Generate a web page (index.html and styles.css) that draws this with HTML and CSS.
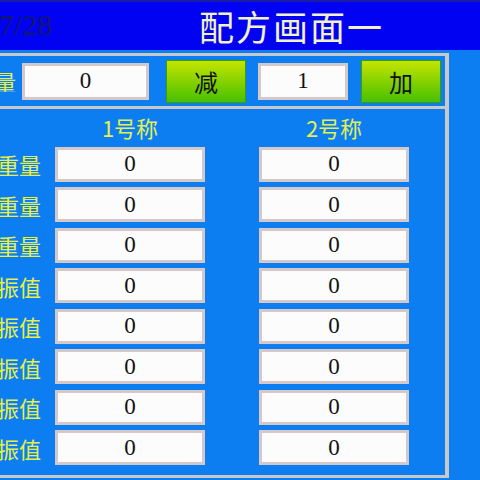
FILE: index.html
```html
<!DOCTYPE html>
<html>
<head>
<meta charset="utf-8">
<link rel="stylesheet" href="styles.css">
</head>
<body>
<div class="screen">
  <div class="header">
    <div class="date">7/28</div>
    <div class="title">配方画面一</div>
  </div>
  <div class="panel top">
    <div class="lbl top-lbl">重量</div>
    <div class="field f1">0</div>
    <div class="btn b1">减</div>
    <div class="field f2">1</div>
    <div class="btn b2">加</div>
  </div>
  <div class="panel main">
    <div class="grid">
      <div></div>
      <div class="colhead">1号称</div>
      <div class="colhead">2号称</div>

      <div class="lbl">重量</div><div class="field cell">0</div><div class="field cell">0</div>
      <div class="lbl">重量</div><div class="field cell">0</div><div class="field cell">0</div>
      <div class="lbl">重量</div><div class="field cell">0</div><div class="field cell">0</div>
      <div class="lbl">振值</div><div class="field cell">0</div><div class="field cell">0</div>
      <div class="lbl">振值</div><div class="field cell">0</div><div class="field cell">0</div>
      <div class="lbl">振值</div><div class="field cell">0</div><div class="field cell">0</div>
      <div class="lbl">振值</div><div class="field cell">0</div><div class="field cell">0</div>
      <div class="lbl">振值</div><div class="field cell">0</div><div class="field cell">0</div>
    </div>
  </div>
</div>
</body>
</html>
```
FILE: styles.css
```css
html, body {
  margin: 0;
  padding: 0;
}
body {
  width: 480px;
  height: 480px;
  overflow: hidden;
  background: #0c7ef2;
}
.screen {
  width: 480px;
  height: 480px;
  background: #0c7ef2;
}
.header {
  height: 48px;
  background: #0202f2;
  border-top: 2px solid #1a1aa8;
  display: flex;
  align-items: center;
}
.date {
  width: 200px;
  margin-left: -1px;
  font-family: "Liberation Serif", serif;
  font-size: 30px;
  color: #12166e;
  line-height: 1;
  margin-top: -2px;
}
.title {
  font-family: "Noto Sans CJK SC", sans-serif;
  font-size: 35px;
  letter-spacing: 2px;
  color: #f2f2c8;
  line-height: 1;
  margin-top: -2px;
}
.panel {
  width: 445px;
  border-right: 4px solid #c8c8c8;
  border-bottom: 3px solid #c8c8c8;
  box-sizing: content-box;
}
.panel.top {
  margin-top: 3px;
  border-top: 3px solid #c8c8c8;
  height: 50px;
  display: flex;
  align-items: center;
}
.lbl {
  font-family: "Noto Sans CJK SC", sans-serif;
  font-size: 22px;
  color: #e6f046;
  white-space: nowrap;
  overflow: hidden;
  direction: rtl;
  text-align: right;
  line-height: 1;
}
.top-lbl {
  width: 16px;
  margin-right: 6px;
}
.field {
  background: #fdfcfc;
  border: 3px solid #d4c8c8;
  box-sizing: border-box;
  display: flex;
  align-items: center;
  justify-content: center;
  font-family: "Liberation Serif", serif;
  font-size: 23px;
  color: #111;
}
.f1 { width: 127px; height: 37px; }
.f2 { width: 90px; height: 37px; margin-left: 12px; }
.btn {
  width: 80px;
  height: 43px;
  background: linear-gradient(#c4e400, #48c000);
  border: 1px solid #3aa000;
  box-sizing: border-box;
  display: flex;
  align-items: center;
  justify-content: center;
  font-family: "Noto Sans CJK SC", sans-serif;
  font-size: 24px;
  color: #111;
}
.b1 { margin-left: 17px; }
.b2 { margin-left: 13px; }
.panel.main {
  height: 366px;
}
.grid {
  display: grid;
  grid-template-columns: 41px 150px 150px;
  column-gap: 14px;
  grid-template-rows: 28px;
  grid-auto-rows: 35px;
  row-gap: 5.5px;
  padding-top: 4px;
}
.grid > :nth-child(3) { margin-left: 40px; margin-right: -40px; }
.grid > .cell:nth-child(3n) { margin-left: 40px; margin-right: -40px; }
.colhead {
  font-family: "Noto Sans CJK SC", sans-serif;
  font-size: 22px;
  color: #e2f050;
  text-align: center;
  line-height: 28px;
}
.grid .lbl {
  display: flex;
  align-items: center;
  justify-content: flex-start;
}
```
